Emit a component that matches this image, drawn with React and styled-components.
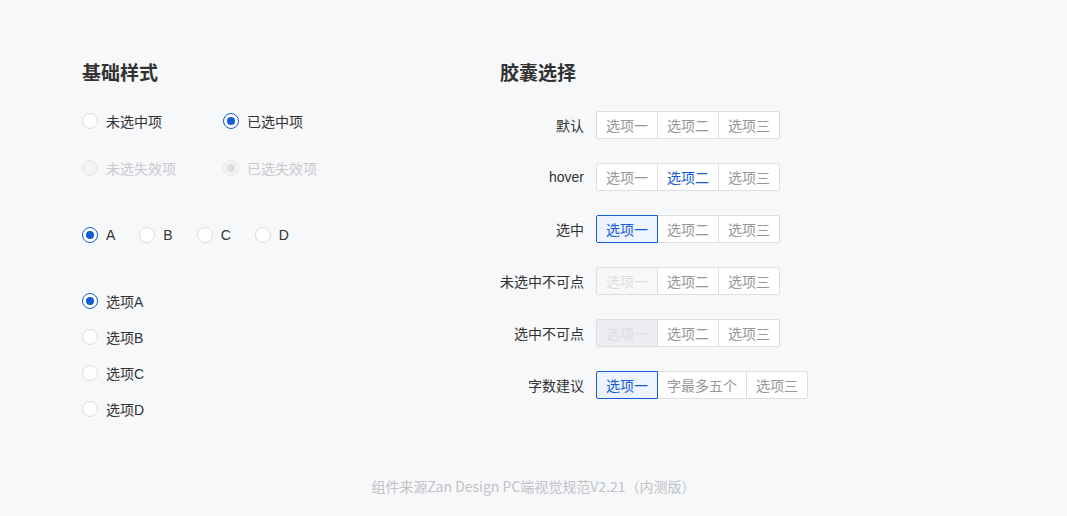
import React from 'react'
import styled, { createGlobalStyle } from 'styled-components'

const GlobalStyle = createGlobalStyle`
  html, body {
    margin: 0;
    padding: 0;
    background: #f7f8fa;
  }
  body {
    font-family: "Liberation Sans", "Noto Sans CJK SC", sans-serif;
    color: #323233;
  }
`

const BLUE = '#155bd4'

const Page = styled.div`
  width: 1067px;
  height: 516px;
  box-sizing: border-box;
  padding-top: 59px;
  display: flex;
  flex-direction: column;
`

const Columns = styled.div`
  display: grid;
  grid-template-columns: 418px auto;
  padding-left: 82px;
`

const Section = styled.section`
  display: flex;
  flex-direction: column;
`

const Title = styled.h2`
  margin: 0;
  height: 25px;
  line-height: 25px;
  font-size: 19px;
  font-weight: 700;
  color: #323233;
  font-family: "Noto Sans CJK SC", sans-serif;
`

const RadioRow = styled.div`
  display: flex;
  align-items: center;
  height: 24px;
  margin-top: ${({ $top }) => $top}px;
  gap: ${({ $gap }) => $gap || 0}px;
`

const RadioItem = styled.label`
  display: flex;
  align-items: center;
  gap: 8px;
  width: ${({ $width }) => ($width ? `${$width}px` : 'auto')};
  font-size: 14px;
  color: ${({ $disabled }) => ($disabled ? '#c8c9cc' : '#323233')};
`

const Circle = styled.span`
  box-sizing: border-box;
  width: 16px;
  height: 16px;
  border-radius: 50%;
  flex: none;
  display: flex;
  align-items: center;
  justify-content: center;
  background: ${({ $disabled }) => ($disabled ? '#f2f3f5' : '#fff')};
  border: 1px solid
    ${({ $checked, $disabled }) =>
      $disabled ? '#e5e6e8' : $checked ? BLUE : '#dcdee0'};

  &::after {
    content: '';
    display: ${({ $checked }) => ($checked ? 'block' : 'none')};
    width: 8px;
    height: 8px;
    border-radius: 50%;
    background: ${({ $disabled }) => ($disabled ? '#dcdee0' : BLUE)};
  }
`

const Radio = ({ checked, disabled, width, children }) => (
  <RadioItem $disabled={disabled} $width={width}>
    <Circle $checked={checked} $disabled={disabled} />
    <span>{children}</span>
  </RadioItem>
)

const CapsuleTable = styled.div`
  display: grid;
  grid-template-columns: max-content auto;
  column-gap: 12px;
  row-gap: 24px;
  margin-top: 27px;
  align-items: center;
`

const RowLabel = styled.div`
  text-align: right;
  font-size: 14px;
  color: #323233;
`

const Capsule = styled.div`
  display: flex;
  height: 28px;
`

const Segment = styled.div`
  box-sizing: border-box;
  height: 28px;
  padding: 0 9px;
  display: flex;
  align-items: center;
  font-size: 14px;
  white-space: nowrap;
  position: relative;
  border: 1px solid #dcdee0;
  background: #fff;
  color: #969799;
  & + & {
    margin-left: -1px;
  }
  &:first-child {
    border-radius: 2px 0 0 2px;
  }
  &:last-child {
    border-radius: 0 2px 2px 0;
  }

  ${({ $state }) =>
    $state === 'hover' &&
    `
    color: ${BLUE};
  `}
  ${({ $state }) =>
    $state === 'active' &&
    `
    color: ${BLUE};
    border-color: ${BLUE};
    background: #edf4ff;
    z-index: 1;
  `}
  ${({ $state }) =>
    $state === 'disabled' &&
    `
    color: #dcdee0;
    background: #f7f8fa;
  `}
  ${({ $state }) =>
    $state === 'disabledActive' &&
    `
    color: #dcdee0;
    background: #ebedf0;
  `}
`

const Footer = styled.footer`
  margin-top: auto;
  margin-bottom: 20px;
  text-align: center;
  font-family: "Noto Sans CJK SC", sans-serif;
  font-size: 14px;
  line-height: 20px;
  color: #c0c2c6;
`

const capsuleRows = [
  { label: '默认', states: [] },
  { label: 'hover', states: ['', 'hover'] },
  { label: '选中', states: ['active'] },
  { label: '未选中不可点', states: ['disabled'] },
  { label: '选中不可点', states: ['disabledActive'] },
  { label: '字数建议', states: ['active'], items: ['选项一', '字最多五个', '选项三'] },
]

const defaultItems = ['选项一', '选项二', '选项三']

export default function App() {
  return (
    <Page>
      <GlobalStyle />
      <Columns>
        <Section>
          <Title>基础样式</Title>
          <RadioRow $top={25}>
            <Radio width={141}>未选中项</Radio>
            <Radio checked>已选中项</Radio>
          </RadioRow>
          <RadioRow $top={23}>
            <Radio disabled width={141}>未选失效项</Radio>
            <Radio disabled checked>已选失效项</Radio>
          </RadioRow>
          <RadioRow $top={43} $gap={24}>
            <Radio checked>A</Radio>
            <Radio>B</Radio>
            <Radio>C</Radio>
            <Radio>D</Radio>
          </RadioRow>
          <RadioRow $top={42}>
            <Radio checked>选项A</Radio>
          </RadioRow>
          <RadioRow $top={12}>
            <Radio>选项B</Radio>
          </RadioRow>
          <RadioRow $top={12}>
            <Radio>选项C</Radio>
          </RadioRow>
          <RadioRow $top={12}>
            <Radio>选项D</Radio>
          </RadioRow>
        </Section>

        <Section>
          <Title>胶囊选择</Title>
          <CapsuleTable>
            {capsuleRows.map((row) => (
              <React.Fragment key={row.label}>
                <RowLabel>{row.label}</RowLabel>
                <Capsule>
                  {(row.items || defaultItems).map((item, i) => (
                    <Segment key={item} $state={row.states[i]}>
                      {item}
                    </Segment>
                  ))}
                </Capsule>
              </React.Fragment>
            ))}
          </CapsuleTable>
        </Section>
      </Columns>
      <Footer>组件来源Zan Design PC端视觉规范V2.21（内测版）</Footer>
    </Page>
  )
}
